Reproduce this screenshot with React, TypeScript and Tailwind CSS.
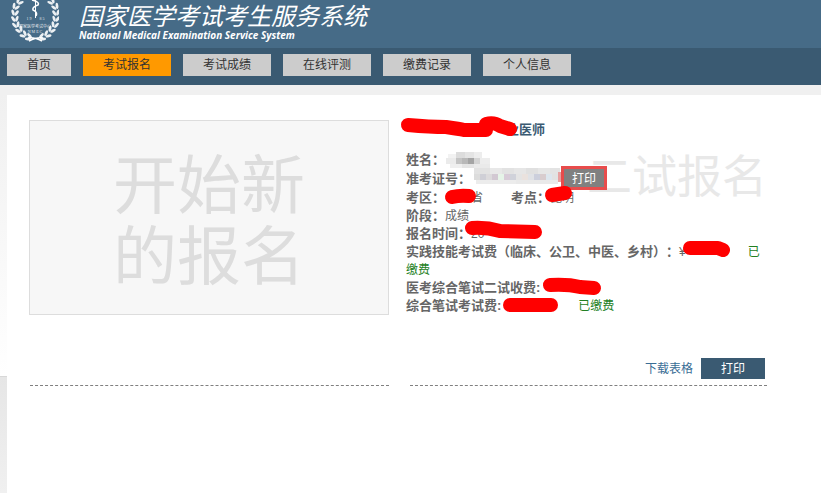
import { useState } from 'react';
import type { ReactNode } from 'react';

const NAV_ITEMS = ['首页', '考试报名', '考试成绩', '在线评测', '缴费记录', '个人信息'];

// [x, y, width, height, fill]
type Tile = [number, number, number, number, string];

const TILES: Tile[] = [
  [42, 34, 8, 6, '#f2f2f2'], [50, 32, 9, 6, '#dcdcdc'], [59, 32, 9, 6, '#e4e4e4'], [68, 32, 8, 6, '#ededed'],
  [40, 38, 10, 6, '#ebebeb'], [50, 38, 6, 6, '#c4c4c4'], [56, 38, 6, 6, '#b8b8b8'], [62, 38, 6, 6, '#a4a4a4'], [68, 38, 6, 6, '#d4d4d4'], [74, 38, 10, 6, '#ededed'],
  [44, 44, 12, 4, '#efefef'], [56, 44, 12, 4, '#e4e4e4'], [68, 44, 16, 4, '#eaeaea'],
  [68, 48, 16, 6, '#e2e2e2'], [84, 48, 12, 6, '#e8e8e8'], [96, 48, 12, 6, '#e2e2e2'], [108, 48, 12, 6, '#e6e6e6'],
  [120, 48, 12, 6, '#e0e0e0'], [132, 48, 12, 6, '#e6e6e6'], [144, 48, 10, 6, '#e3e3e3'],
  [68, 54, 6, 6, '#dcdcdc'], [74, 54, 6, 6, '#cfcfd6'], [80, 54, 6, 6, '#dcdadc'], [86, 54, 6, 6, '#d2c8d2'],
  [92, 54, 6, 6, '#e6f4e8'], [98, 54, 6, 6, '#d8ccd8'], [104, 54, 6, 6, '#d0d2da'], [110, 54, 6, 6, '#e4e4e4'],
  [116, 54, 6, 6, '#eae2de'], [122, 54, 6, 6, '#e0e2e6'], [128, 54, 6, 6, '#cccfdc'], [134, 54, 6, 6, '#d8ccce'],
  [140, 54, 6, 6, '#dde6ee'], [146, 54, 8, 6, '#e2e2e2'],
  [70, 60, 40, 4, '#ececec'], [110, 60, 42, 4, '#e9e9e9'],
  [152, 52, 3, 10, '#e8a0a0'],
];

const STROKES = [
  'M2 5 Q24 7 40 7 Q54 9 58 10 L80 10',
  'M80 4 Q88 2 94 6 L104 9',
  'M46 77 Q54 75 63 76',
  'M146 75 L159 73',
  'M66 108 Q80 107 94 111 L129 112',
  'M284 128 L312 128 L317 130',
  'M144 165 Q162 164 174 167 L188 168',
  'M104 185 L145 185',
];

// x, y and heading of each leaf pair on the left branch
const LEAVES = [
  [9, 1, -50],
  [5, 6, -60],
  [4, 12, -82],
  [4, 18, -95],
  [5, 24, -108],
  [8, 29, -125],
  [12, 34, -140],
  [17, 37, -155],
];

function Emblem() {
  const branch = LEAVES.map(([x, y, turn]) => (
    <g key={y} transform={`translate(${x} ${y}) rotate(${turn})`}>
      <ellipse cx="0" cy="-2" rx="3.1" ry="1.4" transform="rotate(-25)" />
      <ellipse cx="0" cy="2" rx="3.1" ry="1.4" transform="rotate(25)" />
    </g>
  ));
  return (
    <svg className="h-12 w-12 shrink-0" viewBox="0 0 48 48" fill="#fff" aria-hidden="true">
      <g opacity="0.9">{branch}</g>
      <g opacity="0.9" transform="translate(49 0) scale(-1 1)">
        {branch}
      </g>
      <path d="M17 38Q23 37 31 41 M32 38Q26 37 18 41" fill="none" stroke="#fff" strokeWidth="1.5" />
      <path d="M24.5 0V18" stroke="#fff" strokeWidth="1" />
      <path d="M21 0Q29 2 27 5Q21 7 22 10Q27 12 25 16" fill="none" stroke="#fff" strokeWidth="1.5" />
      <g fontFamily="Liberation Serif, Noto Sans CJK SC, serif" fontSize="4" textAnchor="middle" opacity="0.85">
        <text x="18" y="20">1 9</text>
        <text x="31" y="20">8 5</text>
        <text x="24" y="28">国家医学考试中心</text>
        <text x="24" y="33">N M E C</text>
      </g>
    </svg>
  );
}

function Row({ label, children }: { label: string; children?: ReactNode }) {
  return (
    <div>
      <dt className="inline text-[13px] font-bold">{label}</dt>
      <dd className="inline">{children}</dd>
    </div>
  );
}

function Gap({ className }: { className: string }) {
  return <span className={`inline-block ${className}`} />;
}

function Redactions() {
  return (
    <svg className="pointer-events-none absolute top-0 left-0 h-[200px] w-full overflow-visible" aria-hidden="true">
      {TILES.map(([x, y, w, h, fill], i) => (
        <rect key={i} x={x} y={y} width={w} height={h} fill={fill} />
      ))}
      {STROKES.map((d) => (
        <path key={d} d={d} fill="none" stroke="#f00" strokeWidth="14" strokeLinecap="round" strokeLinejoin="round" />
      ))}
    </svg>
  );
}

export default function App() {
  const [active, setActive] = useState('考试报名');

  return (
    <div className="flex min-h-screen flex-col bg-[#f0f0f0] font-['Liberation_Sans','Noto_Sans_CJK_SC',sans-serif] text-xs text-[#666] [text-spacing-trim:space-all]">
      <header className="flex h-12 items-start gap-5 overflow-hidden bg-[#466b87] pl-[11px] text-white">
        <Emblem />
        <div className="pt-[5px]">
          <h1 className="text-2xl leading-6 italic">国家医学考试考生服务系统</h1>
          <p className="font-['Open_Sans',sans-serif] text-[10px] leading-3 font-bold italic">
            National Medical Examination Service System
          </p>
        </div>
      </header>

      <nav className="flex gap-3 bg-[#3a5a72] px-[7px] pt-1.5 pb-[9px]">
        {NAV_ITEMS.map((item) => (
          <button
            key={item}
            type="button"
            onClick={() => setActive(item)}
            className={`h-[22px] px-5 leading-5 text-[#333] ${item === active ? 'bg-[#ff9900]' : 'bg-[#ccc]'}`}
          >
            {item}
          </button>
        ))}
      </nav>

      <div className="mt-2.5 flex flex-1">
        <div className="flex w-[7px] shrink-0 flex-col">
          <div className="h-[281px] bg-linear-to-b from-[#f0f0f0] to-white" />
          <div className="flex-1 border-t border-[#d8d8d8] bg-linear-to-b from-[#e6e6e6] to-[#f0f0f0]" />
        </div>

        <main className="flex-1 bg-white pt-[25px] pl-[22px]">
          <div className="grid max-w-[738px] grid-cols-2 gap-x-4">
            <section className="flex flex-col">
              <button
                type="button"
                className="mr-px flex h-[195px] items-center justify-center border border-[#ddd] bg-[#f7f7f7] pt-2 text-[64px] leading-[71px] text-[#ddd]"
              >
                <span>
                  开始新
                  <br />
                  的报名
                </span>
              </button>
              <div className="mx-px mt-auto border-b border-dashed border-[#808080]" />
            </section>

            <section className="flex flex-col">
              <div className="relative pt-px">
                <div className="absolute top-[31px] right-0 text-[45px] leading-[54px] text-[#e8e8e8]">二试报名</div>
                <h2 className="relative pl-[100px] text-[13px] leading-[18px] font-bold text-[#3a5a72]">业医师</h2>
                <dl className="relative mt-3 pr-1 leading-[18px]">
                  <Row label="姓名：" />
                  <Row label="准考证号：">
                    <Gap className="w-[93px]" />
                    <button type="button" className="h-[18px] bg-[#808080] px-2 leading-5 text-white outline-3 outline-[#e84c4c]">
                      打印
                    </button>
                  </Row>
                  <div className="mt-px flex">
                    <Row label="考区：">
                      <Gap className="w-[26px]" />省
                    </Row>
                    <Gap className="w-7" />
                    <Row label="考点：">昆明</Row>
                  </div>
                  <Row label="阶段：">成绩</Row>
                  <Row label="报名时间：">20</Row>
                  <Row label="实践技能考试费（临床、公卫、中医、乡村）：">
                    ¥<Gap className="w-[62px]" />
                    <span className="text-[#228022]">已缴费</span>
                  </Row>
                  <Row label="医考综合笔试二试收费:" />
                  <Row label="综合笔试考试费:">
                    <Gap className="w-[77px]" />
                    <span className="text-[#228022]">已缴费</span>
                  </Row>
                </dl>
                <Redactions />
              </div>
              <div className="mt-[43px] flex items-center justify-end gap-2 pr-0.5">
                <a href="#download" className="text-[#3a6d95]">
                  下载表格
                </a>
                <button type="button" className="h-[21px] bg-[#3a5a72] px-5 text-white">
                  打印
                </button>
              </div>
              <div className="mt-1.5 ml-1 border-b border-dashed border-[#808080]" />
            </section>
          </div>
        </main>
      </div>
    </div>
  );
}
